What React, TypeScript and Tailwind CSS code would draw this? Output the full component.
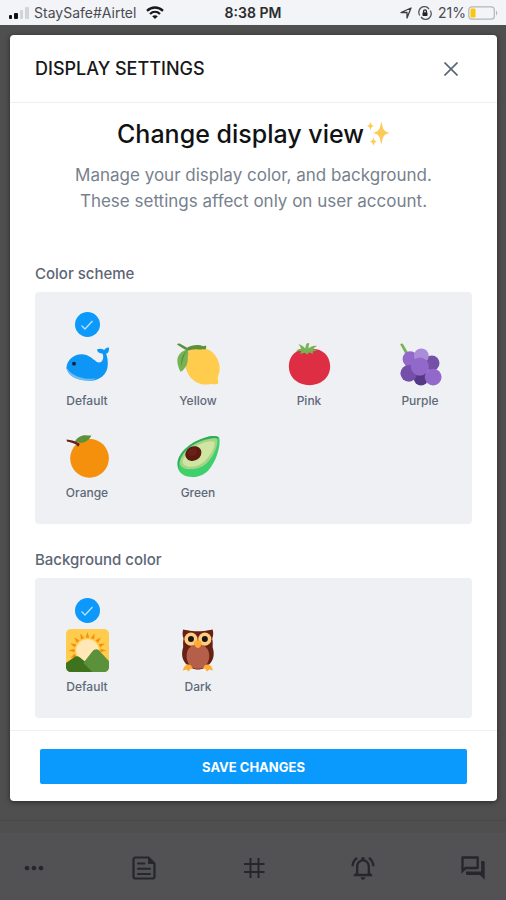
import { useState } from "react";
import type { ReactNode } from "react";
import {
  MdMoreHoriz,
  MdOutlineNotificationsActive,
  MdOutlineQuestionAnswer,
} from "react-icons/md";

function Emoji({ children, className = "size-[43px]" }: { children: ReactNode; className?: string }) {
  return (
    <svg viewBox="0 0 36 36" className={className} aria-hidden="true">
      {children}
    </svg>
  );
}

const Whale = () => (
  <Emoji>
    <path
      fill="#0d96f6"
      d="M.3 21C1 14 6.500 9.500 13 9.500c6 0 9.500 4 12.500 6.200 2.500 1.500 5 .3 5.500-2.700.3-1.700.1-3.400-.5-4.300-2.500.3-4.500-1-4.600-3.200 2-1 4.300-.8 6.100.3 1-1.500 2.600-2.200 4-2 .3 2.800-.7 4.700-2.400 5.300 1 2.200 1.400 5.200 1.400 8.400 0 8.500-6.500 14-15 14C11 31.500 2 28.500.3 21z"
    />
    <path fill="#6cbcf5" d="M.3 20c2 4.500 7.700 8 13.700 9.200 4 .9 8 .8 11 .6-2 1.200-4.500 1.800-7 1.700C9.500 31.200 1.300 28 .3 20z" />
    <circle cx="6.700" cy="17.300" r="1.600" fill="#18222b" />
  </Emoji>
);

const Lemon = () => (
  <Emoji>
    <path
      fill="#ffcc4d"
      d="M8.500 8C12 3.800 19 3 25 5c7 2.600 11.500 10.500 10.600 18-.2 2.600-1 4.500-1.600 6 .3 1.700.8 3.800.3 5.200-1.800.8-4 .2-6 .2-6.300 1.400-13-.6-17.300-6C6.500 23 5 13.500 8.500 8z"
    />
    <path fill="#5c913b" d="M0 1.200c.3-.8 1.500-1 2.600-.5L8.500 4c4-2.800 10-3 13.500-1.200l2-.8c.9 1 .6 2.600-.5 3.400-2-.5-4 .2-6 0-3.500-.4-6 .4-8.500 1.200C6 4.800 3 3.500 0 1.200z" />
    <path fill="#77b255" d="M8.700 5.500C4 6.500.2 10 .3 15c.1 3.500 1.300 6.500 2.700 9 3.500-1.700 6-6 6-10.500 0-3 1-5.500-.3-8z" />
    <path fill="#5c913b" d="M8.500 6c-3 4-4 9-5 14-.3-5.500.5-10.500 5-14z" />
  </Emoji>
);

const Tomato = () => (
  <Emoji>
    <path fill="#dd2e44" d="M18 5.500C25 3.500 35.300 8 35.300 19.500 35.300 29 27.500 35.300 18 35.300S.7 29 .7 19.500C.7 8 11 3.500 18 5.500z" />
    <path
      fill="#77b255"
      d="M8.500.8c2.400.7 4.500 1.900 6 3.700.2-1.700.5-3 1.500-4.500l2 .5c-.8 1.400-.9 2.700-.7 4 2-1.900 4.500-2.500 7-2-1.700.7-2.600 1.800-3.200 2.900 1.200 0 2.300.5 3 1.400-1.800-.2-2.700.1-3.600.5l.6 2-3-1.300c-1 .3-1.700 1-2.100 2-.5-1-1.300-1.600-2.300-1.800L10 9.300l1.200-2.500c-1.500-.3-3 0-4.500.7.8-1.700 2.300-2.600 4.200-2.600C10.600 3.200 9.800 1.800 8.500.8z"
    />
  </Emoji>
);

const Grapes = () => (
  <Emoji>
    <path fill="#77b255" d="M1 1c1-.9 2-.7 2.600.2l4.400 7.500-2.100 1.300z" />
    <circle cx="18.400" cy="29.600" r="6" fill="#553986" />
    <circle cx="27.500" cy="16.800" r="6.400" fill="#7450a8" />
    <circle cx="9.400" cy="13.400" r="6.400" fill="#9268ca" />
    <circle cx="18.700" cy="10.700" r="6.200" fill="#aa8dd8" />
    <circle cx="8.200" cy="25.400" r="7" fill="#7450a8" />
    <circle cx="28.600" cy="28.600" r="7" fill="#9268ca" />
    <circle cx="17.500" cy="19.800" r="7.600" fill="#9268ca" />
  </Emoji>
);

const Orange = () => (
  <Emoji>
    <circle cx="19.700" cy="19.500" r="16.200" fill="#f4900c" />
    <path fill="#5c913b" d="M7.500 5.500C9 2 13.500-.3 17 .2c1.800.2 3.500.2 4.300.2C19 5.500 13.500 8 7.500 5.500z" />
    <path fill="#662113" d="M.5 3.800c3.500.4 6.500 1 9 2.400.9.3 1.800.8 1.900 1.300-.2.900-.7 2-1.400 2.300-.5-.6-.9-1.300-1.500-1.800C6 6.700 3.500 5.800.8 5.400z" />
  </Emoji>
);

const Avocado = () => (
  <Emoji>
    <path fill="#3dd06b" d="M.5 24C1 14 13 5 24 2c6.500-2 11-1.500 11.500 1 1 6-2 18.500-9.500 27C19.500 36.500 9 36.500 4 32.500 1.200 30.300.2 27.500.5 24z" />
    <path fill="#2fae58" d="M.5 23C1.500 13.500 13 5 24 2c6.500-2 10.500-1.500 11.300.7C28 2.500 21 4.500 15 8.500 8 13 3 18 1.600 23.500c-.4 2 .1 3.800.8 5.500C.8 27.500.3 25.300.5 23z" />
    <path fill="#a6d388" d="M2.500 22C4 14 14 6.500 23.500 4c6.500-1.800 10-1.800 10.300.3C34 10 30.500 18 24.500 24 18.500 29.300 8.500 30 4.500 27 2.500 25.500 2 24 2.500 22z" />
    <path fill="#cfe5a2" d="M4.800 21.500C6.500 14.500 15 8.200 23.500 6c4.500-1.200 7.700-1.200 8 .3.3 4.200-3.500 11-8.500 15.800-5 4.500-12.500 5.400-16 3.400-1.800-1-2.700-2.300-2.200-4z" />
    <ellipse cx="13.700" cy="15.500" rx="7" ry="5.900" fill="#5c1a10" transform="rotate(-28 13.700 15.500)" />
    <ellipse cx="13" cy="14.500" rx="4" ry="3" fill="#6a2015" transform="rotate(-28 13 14.500)" />
  </Emoji>
);

const Sunrise = () => (
  <Emoji>
    <rect width="36" height="36" rx="4" fill="#ffcc4d" />
    <path
      fill="#f4900c"
      d="M18 2.500l1.500 4.800h-3zM24 3.700l-.4 5-2.800-1.200zM29.200 7.200l-2.300 4.500-2.200-2.200zM32.500 12.200l-3.900 3.300-1.200-2.900zM33.800 18l-5 1.500v-3zM12 3.700l3.200 3.800-2.800 1.200zM6.800 7.200l4.500 2.300-2.200 2.200zM3.500 12.200l5.100.4-1.200 2.900zM2.200 18l5-1.500v3zM3.500 24l3.900-3.400 1.200 2.900zM32.500 24l-5.100-.5 1.200-2.900z"
    />
    <circle cx="18" cy="18" r="9.500" fill="#ffe8b6" />
    <path fill="#3e721d" d="M0 28.500l6.500-4.700c1.700-1.200 3.500-1.200 5.200 0L24 34v2H4c-2.200 0-4-1.800-4-4z" />
    <path fill="#5c913b" d="M14.500 28.500l7.500-9.700c2-2.500 4.700-2.500 6.500 0L36 27v5c0 2.200-1.800 4-4 4H22z" />
  </Emoji>
);

const Owl = () => (
  <Emoji>
    <path
      fill="#662113"
      d="M5.200.5C8 1 10 1.500 12.500 1.700c3.300.3 6.700.3 10 0C25 1.500 27 1 29.800.5c.8 2.500.7 5-.3 7.500.6 3 .4 5 .3 7 1.900 6 1 11.500-3.300 15-1.500 2-5 4-9 4s-7.500-2-9-4C4.200 26.500 3.300 21 5.200 15c-.1-2-.3-4 .3-7-1-2.500-1.100-5-.3-7.500z"
    />
    <path fill="#b55f4b" d="M17.500 13c6 0 9.500 4 9.500 9.500 0 6-4 10.800-9.500 10.800S8 28.500 8 22.500C8 17 11.500 13 17.500 13z" />
    <path fill="#ffac33" d="M9.500 29.800c2 0 3.500 1.700 3.800 3.700l-2-.2-1.400 2.300-1.900-1.700-3 .8c.4-2.600 2-4.900 4.500-4.900zM25.500 29.800c-2 0-3.500 1.700-3.800 3.700l2-.2 1.400 2.300 1.900-1.700 3 .8c-.4-2.600-2-4.900-4.500-4.900z" />
    <circle cx="11.700" cy="8.500" r="5.500" fill="#ffcc80" />
    <circle cx="23.300" cy="8.500" r="5.500" fill="#ffcc80" />
    <circle cx="11.700" cy="8.300" r="2.500" fill="#181512" />
    <circle cx="23.300" cy="8.300" r="2.500" fill="#181512" />
    <path fill="#ffac33" d="M17.500 9.500c2.300 0 3.500 1.200 3.100 3-.4 1.600-1.800 3.200-3.100 3.500-1.300-.3-2.700-1.900-3.100-3.500-.4-1.800.8-3 3.100-3z" />
  </Emoji>
);

const Sparkles = () => (
  <Emoji className="size-[26px]">
    <path
      fill="#fdcb58"
      d="M35.500 16.500c-6.500 1.300-9.200 4-10.500 11.500-.3 1.500-.6 3.500-1 5-.4-1.500-.7-3.500-1-5-1.300-7.500-4-10.200-10.500-11.500 6.500-1.300 9.200-4 10.500-11.500.3-1.500.6-3 1-4 .4 1 .7 2.500 1 4 1.300 7.500 4 10.200 10.500 11.500zM14 7c-3.200.8-4.300 2-5.100 6-.8-4-1.900-5.200-5.100-6C7 6.200 8.100 5 8.900 1c.8 4 1.900 5.200 5.100 6zM18.500 28.500c-3.500.8-4.700 2-5.500 6.500-.8-4.500-2-5.700-5.500-6.500 3.500-.8 4.700-2 5.500-6.500.8 4.500 2 5.700 5.500 6.500z"
    />
  </Emoji>
);

const FeedIcon = ({ className }: { className: string }) => (
  <svg viewBox="0 0 28 28" className={className} fill="none" stroke="currentColor" strokeWidth="2.200" strokeLinejoin="round" aria-hidden="true">
    <path d="M5.500 3.500h13l6 6v13a2 2 0 0 1-2 2h-17a2 2 0 0 1-2-2v-17a2 2 0 0 1 2-2z" />
    <path d="M18.500 3.500v6h6z" fill="currentColor" strokeWidth="1" />
    <path d="M8 9.500h6.500M8 14.800h12M8 20h12" strokeLinecap="round" strokeWidth="2" />
  </svg>
);

const HashIcon = ({ className }: { className: string }) => (
  <svg viewBox="0 0 28 28" className={className} fill="none" stroke="currentColor" strokeWidth="2" aria-hidden="true">
    <path d="M10.500 4v20M18.500 4v20M4 10h20.500M4 18h20.500" />
  </svg>
);

type Option = { id: string; label: string; icon: ReactNode };

const schemes: Option[] = [
  { id: "blue", label: "Default", icon: <Whale /> },
  { id: "yellow", label: "Yellow", icon: <Lemon /> },
  { id: "pink", label: "Pink", icon: <Tomato /> },
  { id: "purple", label: "Purple", icon: <Grapes /> },
  { id: "orange", label: "Orange", icon: <Orange /> },
  { id: "green", label: "Green", icon: <Avocado /> },
];

const backgrounds: Option[] = [
  { id: "light", label: "Default", icon: <Sunrise /> },
  { id: "dark", label: "Dark", icon: <Owl /> },
];

function OptionGroup({ title, name, options }: { title: string; name: string; options: Option[] }) {
  const [selected, setSelected] = useState(options[0].id);
  return (
    <fieldset>
      <legend className="mb-2 text-[15px] leading-5 font-medium text-[#5c6675]">{title}</legend>
      <div className="grid grid-cols-[repeat(4,64px)] items-end justify-between gap-y-[26px] rounded-sm bg-[#eef0f4] px-5 pt-5 pb-[23px]">
        {options.map((option) => (
          <label key={option.id} className="relative flex cursor-pointer flex-col items-center">
            <input
              type="radio"
              name={name}
              checked={selected === option.id}
              onChange={() => setSelected(option.id)}
              className="sr-only"
            />
            {selected === option.id && (
              <span className="mb-1.5 flex size-[25px] items-center justify-center rounded-full bg-[#0d99fc]">
                <svg viewBox="0 0 14 12" className="h-3 w-3.5" fill="none" stroke="#b4e0ff" strokeWidth="1.300">
                  <path d="M1.500 6.500l3.500 3.500 7.500-8" />
                </svg>
              </span>
            )}
            {option.icon}
            <span className="mt-[7px] text-xs font-medium text-[#5f6977]">{option.label}</span>
          </label>
        ))}
      </div>
    </fieldset>
  );
}

function StatusBar() {
  return (
    <div className="grid h-[25px] grid-cols-[1fr_auto_1fr] items-center bg-[#f3f4f8] px-2 text-[14px] leading-5 text-[#4a4b4f]">
      <div className="flex items-center gap-1">
        <svg viewBox="0 0 22 12" className="h-3 w-[22px]" aria-hidden="true">
          <rect x="1" y="8" width="3" height="4" rx="1" fill="#111" />
          <rect x="6" y="6" width="4" height="6" rx="1" fill="#111" />
          <rect x="12" y="3" width="3" height="9" rx="1" fill="#d3d4d8" />
          <rect x="17" y="0" width="4" height="12" rx="1" fill="#d3d4d8" />
        </svg>
        <span>StaySafe#Airtel</span>
        <svg viewBox="0 0 18 13" className="ml-1.5 h-[13px] w-[18px]" fill="none" stroke="#17181a" strokeWidth="2.300" aria-hidden="true">
          <path d="M1 4.800c4.600-4.400 11.400-4.400 16 0M4 8c3-2.800 7-2.800 10 0" />
          <path d="M9 13L6.200 10.300c1.700-1.400 3.900-1.400 5.600 0z" fill="#17181a" stroke="none" />
        </svg>
      </div>
      <span className="font-semibold text-[#2b2c2f]">8:38 PM</span>
      <div className="flex items-center justify-end gap-1.5">
        <svg viewBox="0 0 12 12" className="size-3" fill="none" stroke="#3c3d40" strokeWidth="1.300" strokeLinejoin="round" aria-hidden="true">
          <path d="M11 1L7 11V5.500H1z" />
        </svg>
        <svg viewBox="0 0 14 14" className="size-3.5" fill="none" stroke="#55565a" strokeWidth="1.300" aria-hidden="true">
          <path d="M1.800 9.500A5.600 5.600 0 0 1 11 3M12.200 4.500A5.600 5.600 0 0 1 3 11" />
          <rect x="4.500" y="6.200" width="5" height="3.800" rx=".8" fill="#222" stroke="none" />
          <path d="M5.600 6.500V5.300a1.400 1.400 0 0 1 2.800 0v1.200" stroke="#222" />
        </svg>
        <span>21%</span>
        <svg viewBox="0 0 30 14" className="-ml-1 h-3.5 w-[30px]" aria-hidden="true">
          <rect x=".8" y=".8" width="25.500" height="12.400" rx="3" fill="none" stroke="#b4b5b9" strokeWidth="1.200" />
          <rect x="2.500" y="2.500" width="5" height="9" rx="1.200" fill="#fcc60c" />
          <path d="M28 4.500c1.600.8 1.600 4.200 0 5z" fill="#b4b5b9" />
        </svg>
      </div>
    </div>
  );
}

const tabs = [
  { label: "More", Icon: MdMoreHoriz },
  { label: "Feed", Icon: FeedIcon },
  { label: "Channels", Icon: HashIcon },
  { label: "Notifications", Icon: MdOutlineNotificationsActive },
  { label: "Messages", Icon: MdOutlineQuestionAnswer },
];

export default function App() {
  return (
    <div className="flex min-h-screen flex-col bg-[#4f4f4f] font-['Inter','Liberation_Sans',sans-serif]">
      <StatusBar />
      <main className="flex-1 border-b border-[#484848] pt-[10px] pr-[9px] pb-[18px] pl-[10px]">
        <section role="dialog" aria-labelledby="dialog-title" className="rounded-sm bg-white shadow-[0_1px_5px_rgba(0,0,0,0.5)]">
          <header className="flex h-[68px] items-center justify-between border-b border-[#eeeff1] pr-[35px] pl-[25px]">
            <h1 id="dialog-title" className="text-[18px] leading-6 font-medium text-[#17181a]">
              DISPLAY SETTINGS
            </h1>
            <button type="button" aria-label="Close" className="p-1 text-[#5b6777]">
              <svg viewBox="0 0 14 14" className="size-3.5" fill="none" stroke="currentColor" strokeWidth="1.700">
                <path d="M.5.5l13 13M13.500.5l-13 13" />
              </svg>
            </button>
          </header>
          <div className="px-[25px] pt-[15px] pb-3">
            <h2 className="flex items-center justify-center text-[25px] leading-8 font-medium text-[#111213]">
              Change display view
              <Sparkles />
            </h2>
            <p className="mt-3 text-center text-[17px] leading-[26px] text-[#77818d]">
              Manage your display color, and background.
              <br />
              These settings affect only on user account.
            </p>
            <form id="display-form" className="mt-[50px] flex flex-col gap-[26px]">
              <OptionGroup title="Color scheme" name="scheme" options={schemes} />
              <OptionGroup title="Background color" name="background" options={backgrounds} />
            </form>
          </div>
          <footer className="flex border-t border-[#eeeff1] px-[30px] pt-[18px] pb-[17px]">
            <button type="submit" form="display-form" className="h-[35px] flex-1 rounded-xs bg-[#0a99fd] text-[13px] leading-5 font-bold text-white">
              SAVE CHANGES
            </button>
          </footer>
        </section>
      </main>
      <div className="h-3" />
      <nav className="flex h-[67px] items-center justify-between bg-[#525255] pt-0.5 pr-[19px] pl-5 text-[#25272c]">
        {tabs.map(({ label, Icon }) => (
          <button key={label} type="button" aria-label={label}>
            <Icon className="size-7" />
          </button>
        ))}
      </nav>
    </div>
  );
}
